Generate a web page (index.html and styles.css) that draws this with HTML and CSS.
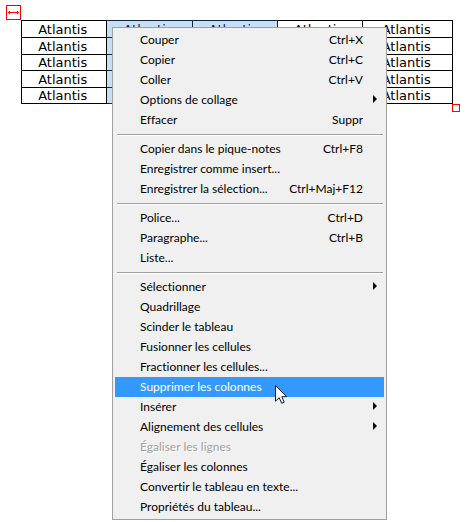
FILE: index.html
```html
<!DOCTYPE html>
<html lang="fr">
<head>
<meta charset="utf-8">
<title>Tableau</title>
<link rel="stylesheet" href="styles.css">
</head>
<body>
<main class="document">
  <div class="table-frame">
    <svg class="move-handle" viewBox="0 0 15 15" shape-rendering="crispEdges" aria-hidden="true">
      <rect x="0.5" y="0.5" width="14" height="14" fill="#fff" stroke="#f00"/>
      <path d="M2 7h11v1H2zM3 6h1v3H3zM11 6h1v3h-1z" fill="#f00"/>
    </svg>
    <table class="grid">
      <colgroup><col class="col"><col class="col"><col class="col"><col class="col"><col></colgroup>
      <tbody>
        <tr><td>Atlantis</td><td class="selected">Atlantis</td><td class="selected">Atlantis</td><td>Atlantis</td><td>Atlantis</td></tr>
        <tr><td>Atlantis</td><td class="selected"></td><td class="selected"></td><td></td><td>Atlantis</td></tr>
        <tr class="short"><td>Atlantis</td><td class="selected"></td><td class="selected"></td><td></td><td>Atlantis</td></tr>
        <tr><td>Atlantis</td><td class="selected"></td><td class="selected"></td><td></td><td>Atlantis</td></tr>
        <tr class="short"><td>Atlantis</td><td class="selected"></td><td class="selected"></td><td></td><td>Atlantis</td></tr>
      </tbody>
    </table>
  </div>
  <div class="corner"></div>
</main>

<div class="menu" role="menu">
  <button class="item" role="menuitem">Couper<span>Ctrl+X</span></button>
  <button class="item" role="menuitem">Copier<span>Ctrl+C</span></button>
  <button class="item" role="menuitem">Coller<span>Ctrl+V</span></button>
  <button class="item submenu" role="menuitem" aria-haspopup="true">Options de collage</button>
  <button class="item" role="menuitem">Effacer<span>Suppr</span></button>
  <hr class="separator">
  <button class="item" role="menuitem">Copier dans le pique-notes<span>Ctrl+F8</span></button>
  <button class="item" role="menuitem">Enregistrer comme insert...</button>
  <button class="item" role="menuitem">Enregistrer la sélection...<span>Ctrl+Maj+F12</span></button>
  <hr class="separator">
  <button class="item" role="menuitem">Police...<span>Ctrl+D</span></button>
  <button class="item" role="menuitem">Paragraphe...<span>Ctrl+B</span></button>
  <button class="item" role="menuitem">Liste...</button>
  <hr class="separator">
  <button class="item submenu" role="menuitem" aria-haspopup="true">Sélectionner</button>
  <button class="item" role="menuitem">Quadrillage</button>
  <button class="item" role="menuitem">Scinder le tableau</button>
  <button class="item" role="menuitem">Fusionner les cellules</button>
  <button class="item" role="menuitem">Fractionner les cellules...</button>
  <button class="item active" role="menuitem">Supprimer les colonnes</button>
  <button class="item submenu" role="menuitem" aria-haspopup="true">Insérer</button>
  <button class="item submenu" role="menuitem" aria-haspopup="true">Alignement des cellules</button>
  <button class="item" role="menuitem" disabled>Égaliser les lignes</button>
  <button class="item" role="menuitem">Égaliser les colonnes</button>
  <button class="item" role="menuitem">Convertir le tableau en texte...</button>
  <button class="item" role="menuitem">Propriétés du tableau...</button>
</div>

<svg class="cursor" viewBox="0 0 12 19" aria-hidden="true">
  <path d="M.5.5V16.2L4.2 12.7 6.7 18.3 9.2 17.2 6.8 11.7H11.6Z" fill="#fff" stroke="#0a1a30"/>
</svg>
</body>
</html>
```

FILE: styles.css
```css
* {
  box-sizing: border-box;
}

body {
  margin: 0;
  background: #fff;
  color: #000;
}

.document {
  display: flex;
  flex-direction: column;
  padding: 20px 10px 0 21px;
}

.table-frame {
  position: relative;
  margin-right: 7px;
}

.grid {
  width: 100%;
  table-layout: fixed;
  border-collapse: collapse;
  font: 13px/15px "DejaVu Sans", Verdana, sans-serif;
}

.col {
  width: 19.8%;
}

.grid td {
  height: 17px;
  padding: 0 3px 0 0;
  border: 1px solid #000;
  text-align: center;
}

.grid .short td {
  height: 16px;
}

.grid .selected {
  background: #c8def6;
  border-color: #13283f;
  color: #13283f;
}

.move-handle {
  position: absolute;
  top: -15px;
  left: -15px;
  width: 15px;
  height: 15px;
}

.corner {
  align-self: flex-end;
  width: 8px;
  height: 8px;
  border: 1px solid #f00;
}

.menu {
  position: absolute;
  top: 27px;
  left: 112px;
  display: flex;
  flex-direction: column;
  min-width: 275px;
  padding: 2px;
  border: 1px solid #a0a0a0;
  background: #f0f0f0;
  font: 12px/20px Lato, "Segoe UI", sans-serif;
  font-variant-ligatures: none;
}

.item {
  display: flex;
  align-items: center;
  justify-content: space-between;
  height: 20px;
  padding: 0 21px 0 25px;
  border: 0;
  background: none;
  color: #000;
  font: inherit;
  font-variant-ligatures: none;
  white-space: nowrap;
}

.submenu {
  padding-right: 7px;
}

.submenu::after {
  content: "";
  margin-bottom: 2px;
  border: 4px solid transparent;
  border-right: 0;
  border-left-color: #000;
}

.active {
  background: #3399ff;
  color: #fff;
}

.item:disabled {
  color: #a0a0a0;
  text-shadow: 1px 1px #fff;
}

.separator {
  height: 2px;
  margin: 4px 1px 3px 2px;
  border: 0;
  border-top: 1px solid #a0a0a0;
  background: #fff;
}

.cursor {
  position: absolute;
  top: 385px;
  left: 275px;
  width: 12px;
  height: 19px;
}
```
